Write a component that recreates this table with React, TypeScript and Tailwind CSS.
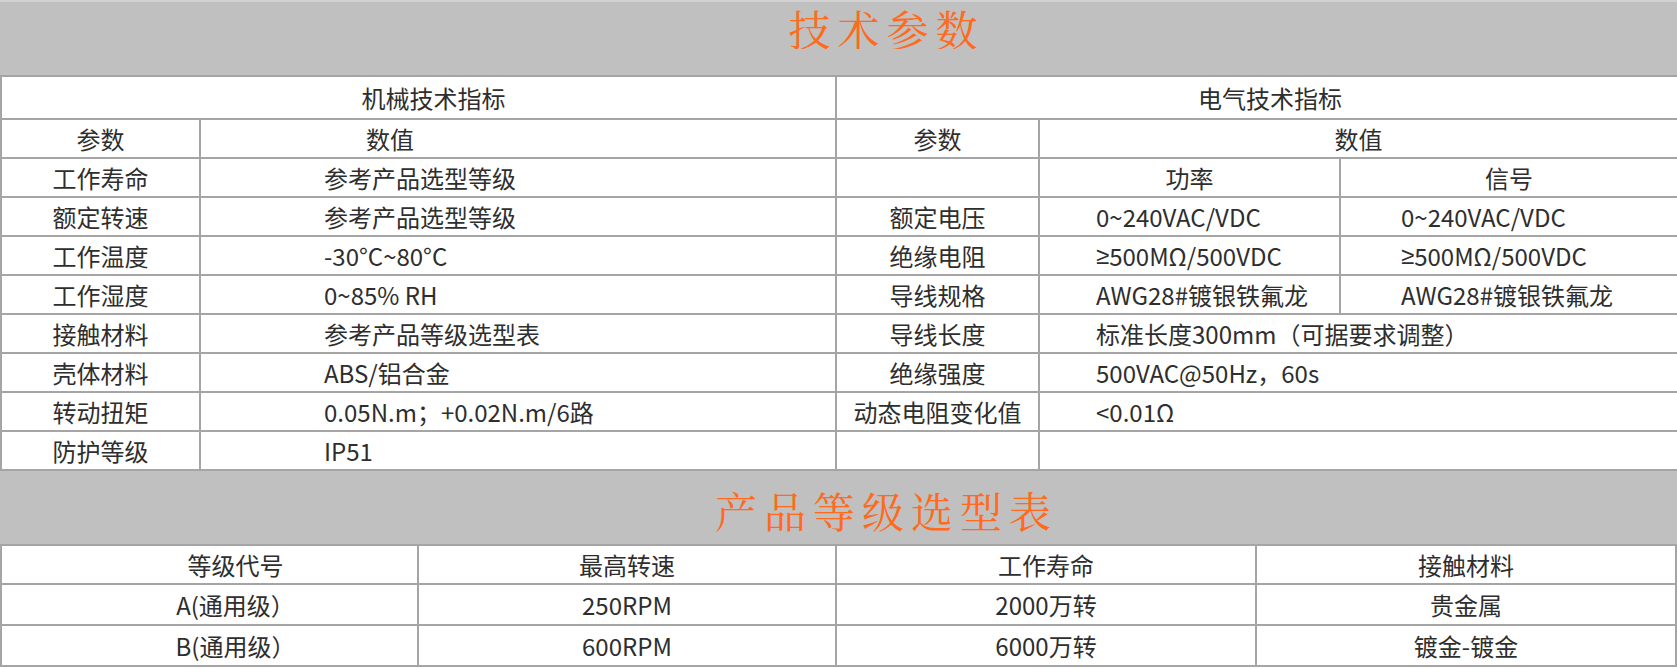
import React from 'react';

const line = 'border-r-2 border-b-2 border-[#a5a5a5]';

type CellProps = {
  children?: React.ReactNode;
  className?: string;
};

function Cell({ children, className = '' }: CellProps) {
  return <div className={`flex items-center ${line} ${className}`}>{children}</div>;
}

function Banner({ title }: { title: string }) {
  return (
    <div className="flex items-center justify-center bg-[#c0c0c0] pl-[96px] pt-[5px]">
      <span className="font-['AR_PL_UKai_CN','KaiTi','STKaiti','Noto_Serif_CJK_SC','Noto_Sans_CJK_SC',serif] text-[42px] leading-none tracking-[7px] text-[#ff6a1c]">
        {title}
      </span>
    </div>
  );
}

// the CJK font draws ≥ full width, the reference has a narrow one
const Gte = () => <span className="font-['Liberation_Sans',sans-serif]">≥</span>;

const mechRows: [string, string][] = [
  ['工作寿命', '参考产品选型等级'],
  ['额定转速', '参考产品选型等级'],
  ['工作温度', '-30°C~80°C'],
  ['工作湿度', '0~85% RH'],
  ['接触材料', '参考产品等级选型表'],
  ['壳体材料', 'ABS/铝合金'],
  ['转动扭矩', '0.05N.m；+0.02N.m/6路'],
  ['防护等级', 'IP51'],
];

// electric side: label, power, signal (null signal = spans both columns)
const elecRows: [string, React.ReactNode, React.ReactNode | null][] = [
  ['', '功率', '信号'],
  ['额定电压', '0~240VAC/VDC', '0~240VAC/VDC'],
  [
    '绝缘电阻',
    <>
      <Gte />
      500MΩ/500VDC
    </>,
    <>
      <Gte />
      500MΩ/500VDC
    </>,
  ],
  ['导线规格', 'AWG28#镀银铁氟龙', 'AWG28#镀银铁氟龙'],
  ['导线长度', '标准长度300mm（可据要求调整）', null],
  ['绝缘强度', '500VAC@50Hz，60s', null],
  ['动态电阻变化值', '<0.01Ω', null],
  ['', '', null],
];

const grades = [
  ['等级代号', '最高转速', '工作寿命', '接触材料'],
  ['A(通用级）', '250RPM', '2000万转', '贵金属'],
  ['B(通用级）', '600RPM', '6000万转', '镀金-镀金'],
];

export default function App() {
  return (
    <div className="flex w-[1677px] flex-col bg-white font-['Noto_Sans_CJK_SC','Liberation_Sans',sans-serif] text-[24px] leading-none text-[#2e2e2e]">
      <div className="flex h-[75px] flex-col border-t-2 border-[#d2d2d2]">
        <Banner title="技术参数" />
        <div className="flex-1 bg-[#c0c0c0]" />
      </div>

      <div className="grid grid-cols-[199px_636px_203px_301px_338px] grid-rows-[43px_repeat(9,39px)] border-t-2 border-l-2 border-[#a5a5a5]">
        <Cell className="col-span-2 justify-center pl-[30px]">机械技术指标</Cell>
        <Cell className="col-span-3 justify-center pl-[26px]">电气技术指标</Cell>

        <Cell className="justify-center">参数</Cell>
        <Cell className="pl-[165px]">数值</Cell>
        <Cell className="justify-center">参数</Cell>
        <Cell className="col-span-2 justify-center">数值</Cell>

        {mechRows.map(([label, value], i) => {
          const [eLabel, power, signal] = elecRows[i];
          const first = i === 0;
          return (
            <React.Fragment key={label + i}>
              <Cell className="justify-center">{label}</Cell>
              <Cell className="pl-[123px]">{value}</Cell>
              <Cell className="justify-center">{eLabel}</Cell>
              {signal === null ? (
                <Cell className="col-span-2 pl-[56px]">{power}</Cell>
              ) : (
                <>
                  <Cell className={first ? 'justify-center' : 'pl-[56px]'}>{power}</Cell>
                  <Cell className={first ? 'justify-center' : 'pl-[60px]'}>{signal}</Cell>
                </>
              )}
            </React.Fragment>
          );
        })}
      </div>

      <div className="flex h-[73px]">
        <div className="flex flex-1 justify-center bg-[#c0c0c0]">
          <Banner title="产品等级选型表" />
        </div>
      </div>

      <div className="grid grid-cols-[417px_418px_420px_420px] grid-rows-[39px_41px_41px] border-t-2 border-l-2 border-[#a5a5a5]">
        {grades.map((row, r) =>
          row.map((text, c) => (
            <Cell key={`${r}-${c}`} className={c === 0 ? 'justify-center pl-[52px]' : 'justify-center'}>
              {text}
            </Cell>
          ))
        )}
      </div>
    </div>
  );
}
